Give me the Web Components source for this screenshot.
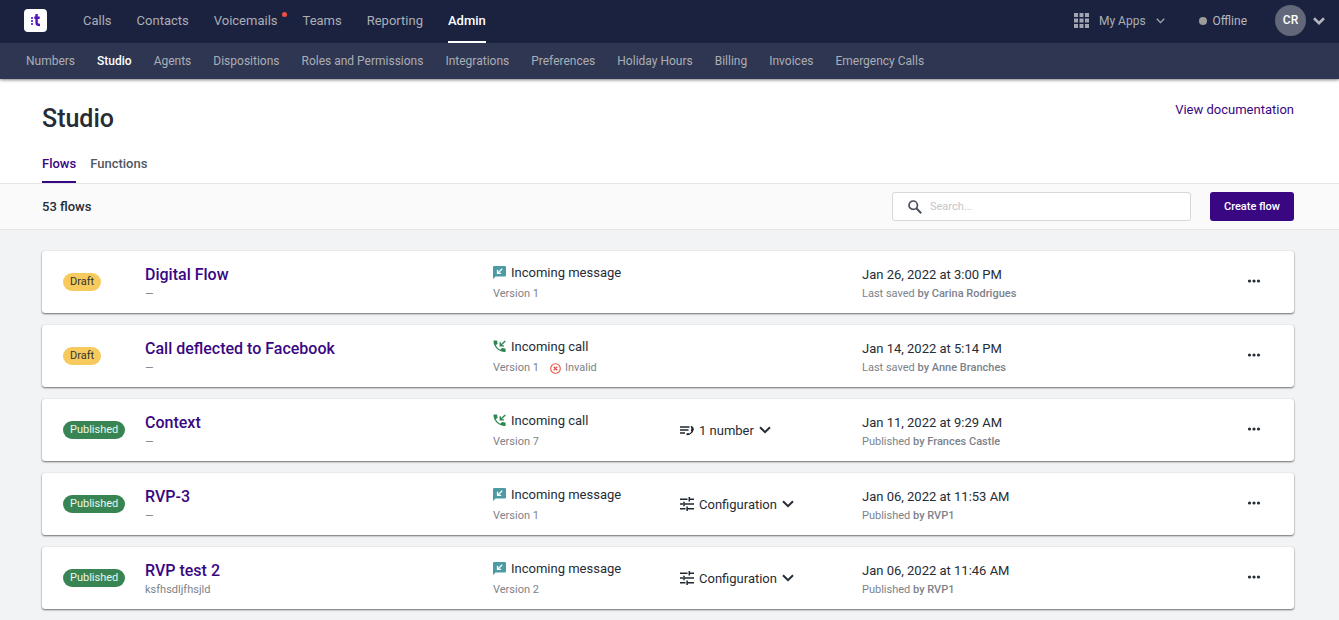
<!DOCTYPE html>
<html lang="en">
<head>
<meta charset="utf-8">
<meta name="viewport" content="width=device-width, initial-scale=1">
<title>Studio</title>
<style>
  body {
    margin: 0;
    background: #f2f3f5;
    color: #262c35;
    font-family: Roboto, "Liberation Sans", sans-serif;
    font-size: 13px;
  }
</style>
</head>
<body>

<app-header>
  <nav-link href="#calls">Calls</nav-link>
  <nav-link href="#contacts">Contacts</nav-link>
  <nav-link href="#voicemails" notify>Voicemails</nav-link>
  <nav-link href="#teams">Teams</nav-link>
  <nav-link href="#reporting">Reporting</nav-link>
  <nav-link href="#admin" active>Admin</nav-link>

  <nav-link slot="sub" small href="#numbers">Numbers</nav-link>
  <nav-link slot="sub" small href="#studio" active>Studio</nav-link>
  <nav-link slot="sub" small href="#agents">Agents</nav-link>
  <nav-link slot="sub" small href="#dispositions">Dispositions</nav-link>
  <nav-link slot="sub" small href="#roles">Roles and Permissions</nav-link>
  <nav-link slot="sub" small href="#integrations">Integrations</nav-link>
  <nav-link slot="sub" small href="#preferences">Preferences</nav-link>
  <nav-link slot="sub" small href="#holidays">Holiday Hours</nav-link>
  <nav-link slot="sub" small href="#billing">Billing</nav-link>
  <nav-link slot="sub" small href="#invoices">Invoices</nav-link>
  <nav-link slot="sub" small href="#emergency">Emergency Calls</nav-link>

  <user-menu slot="user" initials="CR" status="Offline"></user-menu>
</app-header>

<main>
  <page-header>
    Studio
    <page-tab slot="tabs" href="#flows" active>Flows</page-tab>
    <page-tab slot="tabs" href="#functions">Functions</page-tab>
  </page-header>
  <flow-toolbar>53 flows</flow-toolbar>
  <flow-list>
    <flow-card status="Draft" trigger="message" version="1" action="Last saved" by="Carina Rodrigues">
      Digital Flow
      <span slot="date">Jan 26, 2022 at 3:00 PM</span>
    </flow-card>
    <flow-card status="Draft" trigger="call" version="1" invalid action="Last saved" by="Anne Branches">
      Call deflected to Facebook
      <span slot="date">Jan 14, 2022 at 5:14 PM</span>
    </flow-card>
    <flow-card status="Published" trigger="call" version="7" setup="1 number" action="Published" by="Frances Castle">
      Context
      <span slot="date">Jan 11, 2022 at 9:29 AM</span>
    </flow-card>
    <flow-card status="Published" trigger="message" version="1" setup="Configuration" action="Published" by="RVP1">
      RVP-3
      <span slot="date">Jan 06, 2022 at 11:53 AM</span>
    </flow-card>
    <flow-card status="Published" trigger="message" version="2" setup="Configuration" action="Published" by="RVP1">
      RVP test 2
      <span slot="note">ksfhsdljfhsjld</span>
      <span slot="date">Jan 06, 2022 at 11:46 AM</span>
    </flow-card>
  </flow-list>
</main>

<script>
const icons = {
  logo: `<svg width="23" height="23" viewBox="0 0 23 23"><rect width="23" height="23" rx="4" fill="#fff"/>
    <g fill="#6b3fd0"><rect x="7" y="8" width="2" height="2"/><rect x="7" y="11" width="2" height="2"/><rect x="7" y="14" width="2" height="2"/></g>
    <path d="M12.6 5v9q0 2 3.4 2M10.3 8.8h5.4" fill="none" stroke="#5514b4" stroke-width="2.4"/></svg>`,
  apps: `<svg width="15" height="15" viewBox="0 0 15 15" fill="#a3a6b0"><path d="M0 0h4v4H0zM5.500 0h4v4h-4zM11 0h4v4h-4zM0 5.500h4v4H0zM5.500 5.500h4v4h-4zM11 5.500h4v4h-4zM0 11h4v4H0zM5.500 11h4v4h-4zM11 11h4v4h-4z"/></svg>`,
  chevronThin: `<svg width="9" height="6" viewBox="0 0 9 6" fill="none" stroke="#a9acb3" stroke-width="1.300"><path d="M.8.8l3.700 3.800L8.200.8"/></svg>`,
  chevron: `<svg width="12" height="8" viewBox="0 0 12 8" fill="none" stroke="currentColor" stroke-width="2"><path d="M1 1.200l5 5 5-5"/></svg>`,
  chevronBold: `<svg width="12" height="8" viewBox="0 0 12 8" fill="none" stroke="#b5b7bc" stroke-width="2.600"><path d="M1 1.300l5 4.900 5-4.900"/></svg>`,
  search: `<svg width="14" height="14" viewBox="0 0 14 14" fill="none" stroke="#4b515b" stroke-width="1.700"><circle cx="5.200" cy="5.200" r="4.200"/><path d="M8.300 8.300l4.900 4.900" stroke-width="2"/></svg>`,
  message: `<svg width="13" height="13" viewBox="0 0 13 13"><path d="M1.200 0h10.600Q13 0 13 1.200v8.100q0 1.200-1.200 1.200H2.600L0 13V1.200Q0 0 1.200 0z" fill="#4c9ba4"/>
    <path d="M9.200 2.700L4.800 7.100M4.500 3.800v3.600h3.700" fill="none" stroke="#fff" stroke-width="1.300"/></svg>`,
  call: `<svg width="13" height="13" viewBox="0 0 13 13"><path d="M2.600 5.100a9.600 9.600 0 0 0 4.600 4.700l1.600-1.600q.3-.3.7-.2 1.200.4 2.500.4.600 0 .6.600v2.500q0 .6-.6.600C5.500 12.100.5 7 .5 1.100Q.5.500 1.100.500h2.500q.6 0 .6.600 0 1.300.4 2.400.1.400-.2.700z" fill="#2f8552"/>
    <path d="M12.300.9L7.500 5.600M7.300 2.200v3.700H11" fill="none" stroke="#2f8552" stroke-width="1.400"/></svg>`,
  invalid: `<svg width="11" height="11" viewBox="0 0 11 11" fill="none" stroke="#e8554a"><circle cx="5.500" cy="5.500" r="4.800" stroke-width="1.100"/><path d="M3.700 3.700l3.600 3.600M7.300 3.700L3.700 7.300" stroke-width="1.300"/></svg>`,
  numbers: `<svg width="14" height="11" viewBox="0 0 14 11"><path d="M0 2h9.500M0 5h8.500M0 8h5" fill="none" stroke="#20262f" stroke-width="1.500"/>
    <path d="M10.600 1.200q.9-.4 1.900.2Q14.300 3 13.600 5.300q-1.500 4.200-6.100 5-1-.2-1.100-1.100l.3-1 1.900-.2.400.7q1.700-.7 2.500-2.500l-.7-.6.600-2.100z" fill="#20262f"/></svg>`,
  sliders: `<svg width="14" height="14" viewBox="0 0 14 14" fill="none" stroke="#20262f" stroke-width="1.500"><path d="M0 2.300h7.500M9.200 2.300H14M9.300 0v4.600M0 7h3M4.800 7H14M4 4.700v4.600M11 7h3M0 11.700h5.500M7.200 11.700H14M7.100 9.400V14"/></svg>`,
  dots: `<svg width="14" height="4" viewBox="0 0 14 4" fill="#262c35"><circle cx="2.500" cy="2" r="1.600"/><circle cx="7" cy="2" r="1.600"/><circle cx="11.500" cy="2" r="1.600"/></svg>`,
};

class NavLink extends HTMLElement {
  constructor() {
    super();
    this.attachShadow({ mode: "open" });
  }

  connectedCallback() {
    this.shadowRoot.innerHTML = `
      <style>
        :host {
          display: flex;
          flex: none;
          font-size: 13px;
        }

        :host([small]) {
          font-size: 12px;
        }

        a {
          position: relative;
          display: flex;
          align-items: center;
          padding-bottom: 2px;
          color: #abaeb5;
          text-decoration: none;
          white-space: nowrap;
        }

        :host([small]) a {
          padding-bottom: 0;
        }

        :host([active]) a {
          color: #fff;
          font-weight: 500;
        }

        :host([active]:not([small])) a {
          box-shadow: inset 0 -2px #fff;
        }

        i {
          position: absolute;
          top: 12px;
          right: -9px;
          width: 5px;
          height: 5px;
          border-radius: 50%;
          background: #ed5142;
        }
      </style>
      <a href="${this.getAttribute("href")}"><slot></slot>${this.hasAttribute("notify") ? "<i></i>" : ""}</a>
    `;
  }
}

class UserMenu extends HTMLElement {
  constructor() {
    super();
    this.attachShadow({ mode: "open" });
  }

  connectedCallback() {
    this.shadowRoot.innerHTML = `
      <style>
        :host {
          display: flex;
          align-items: center;
          color: #abaeb5;
          font-size: 12px;
        }

        button {
          display: flex;
          align-items: center;
          padding: 0;
          border: 0;
          background: none;
          color: inherit;
          font: inherit;
          cursor: pointer;
        }

        .apps {
          gap: 10px;
          margin-right: 34px;
        }

        .status {
          gap: 6px;
          margin-right: 28px;
          color: #b5b8be;
        }

        .status i {
          width: 8px;
          height: 8px;
          border-radius: 50%;
          background: #9b9b9b;
        }

        .account {
          gap: 7px;
        }

        .avatar {
          width: 31px;
          border-radius: 50%;
          background: #626879;
          color: #fff;
          font-weight: 500;
          line-height: 31px;
          text-align: center;
        }
      </style>
      <button class="apps">${icons.apps}<span>My Apps</span>${icons.chevronThin}</button>
      <button class="status"><i></i><span>${this.getAttribute("status")}</span></button>
      <button class="account"><span class="avatar">${this.getAttribute("initials")}</span>${icons.chevronBold}</button>
    `;
  }
}

class AppHeader extends HTMLElement {
  constructor() {
    super();
    this.attachShadow({ mode: "open" });
  }

  connectedCallback() {
    this.shadowRoot.innerHTML = `
      <style>
        :host {
          display: block;
          position: relative;
          box-shadow: 0 1px 3px rgba(0, 0, 0, 0.5);
        }

        .top,
        .sub,
        .main {
          display: flex;
        }

        .top {
          justify-content: space-between;
          height: 43px;
          padding: 0 14px 0 24px;
          background: #1b2240;
        }

        .main {
          gap: 25px;
        }

        .logo {
          display: flex;
          align-items: center;
          margin-right: 11px;
          padding-bottom: 2px;
        }

        .user {
          display: flex;
          padding-bottom: 2px;
        }

        .sub {
          gap: 22px;
          height: 36px;
          padding: 0 26px;
          background: #2e3652;
        }
      </style>
      <header>
        <div class="top">
          <nav class="main">
            <a class="logo" href="#home" aria-label="Home">${icons.logo}</a>
            <slot></slot>
          </nav>
          <div class="user"><slot name="user"></slot></div>
        </div>
        <nav class="sub"><slot name="sub"></slot></nav>
      </header>
    `;
  }
}

class PageTab extends HTMLElement {
  constructor() {
    super();
    this.attachShadow({ mode: "open" });
  }

  connectedCallback() {
    this.shadowRoot.innerHTML = `
      <style>
        :host {
          display: block;
        }

        a {
          display: block;
          padding: 10px 0 8px;
          border-bottom: 2px solid transparent;
          color: #505762;
          font-size: 13px;
          font-weight: 500;
          line-height: 18px;
          text-decoration: none;
        }

        :host([active]) a {
          border-color: #3a0783;
          color: #3a0783;
        }
      </style>
      <a href="${this.getAttribute("href")}"><slot></slot></a>
    `;
  }
}

class PageHeader extends HTMLElement {
  constructor() {
    super();
    this.attachShadow({ mode: "open" });
  }

  connectedCallback() {
    this.shadowRoot.innerHTML = `
      <style>
        :host {
          display: block;
          padding: 22px 45px 0 42px;
          border-bottom: 1px solid #e5e6e8;
          background: #fff;
        }

        .title {
          display: flex;
          justify-content: space-between;
          align-items: flex-start;
          margin-bottom: 8px;
        }

        h1 {
          margin: 0;
          font-size: 25px;
          font-weight: 500;
          line-height: 36px;
        }

        .docs {
          color: #3a0783;
          line-height: 18px;
          text-decoration: none;
        }

        nav {
          display: flex;
          gap: 14px;
        }
      </style>
      <div class="title">
        <h1><slot></slot></h1>
        <a class="docs" href="#docs">View documentation</a>
      </div>
      <nav><slot name="tabs"></slot></nav>
    `;
  }
}

class FlowToolbar extends HTMLElement {
  constructor() {
    super();
    this.attachShadow({ mode: "open" });
  }

  connectedCallback() {
    this.shadowRoot.innerHTML = `
      <style>
        :host {
          display: flex;
          align-items: center;
          padding: 8px 45px 8px 42px;
          border-bottom: 1px solid #e3e5e8;
          background: #fafafa;
        }

        .count {
          flex: 1;
          font-weight: 500;
        }

        .search {
          display: flex;
          align-items: center;
          gap: 8px;
          box-sizing: border-box;
          width: 299px;
          height: 29px;
          margin-right: 19px;
          padding: 0 15px;
          border: 1px solid #d6d8da;
          border-radius: 3px;
          background: #fff;
        }

        .search svg {
          display: block;
        }

        input {
          flex: 1;
          min-width: 0;
          padding: 0;
          border: 0;
          outline: 0;
          background: none;
          color: inherit;
          font: inherit;
          font-size: 11px;
        }

        input::placeholder {
          color: #c3c6ca;
        }

        button {
          height: 29px;
          padding: 0 14px;
          border: 0;
          border-radius: 3px;
          background: #3a0783;
          color: #fff;
          font: inherit;
          font-size: 11px;
          font-weight: 500;
          cursor: pointer;
        }
      </style>
      <div class="count"><slot></slot></div>
      <div class="search">
        <label for="search">${icons.search}</label>
        <input id="search" type="text" aria-label="Search flows" placeholder="Search...">
      </div>
      <button>Create flow</button>
    `;
  }
}

class FlowList extends HTMLElement {
  constructor() {
    super();
    this.attachShadow({ mode: "open" });
  }

  connectedCallback() {
    this.shadowRoot.innerHTML = `
      <style>
        :host {
          display: flex;
          flex-direction: column;
          gap: 12px;
          padding: 21px 45px 12px 42px;
        }
      </style>
      <slot></slot>
    `;
  }
}

class FlowCard extends HTMLElement {
  constructor() {
    super();
    this.attachShadow({ mode: "open" });
  }

  connectedCallback() {
    this.render();
  }

  render() {
    const status = this.getAttribute("status");
    const trigger = this.getAttribute("trigger");
    const setup = this.getAttribute("setup");
    const setupIcon = setup === "Configuration" ? icons.sliders : icons.numbers;

    this.shadowRoot.innerHTML = `
      <style>
        :host {
          display: grid;
          grid-template-columns: 82px 348fr 187fr 182fr 385fr 14px;
          align-items: center;
          padding: 11px 33px 11px 21px;
          border-radius: 3px;
          background: #fff;
          box-shadow: 0 1px 2px rgba(0, 0, 0, 0.55), 0 0 1px rgba(0, 0, 0, 0.15);
        }

        .badge {
          justify-self: start;
          padding: 0 7px 1px;
          border-radius: 9px;
          font-size: 11px;
          line-height: 17px;
        }

        .draft {
          background: #f7ca5e;
          color: #33342c;
        }

        .published {
          background: #388553;
          color: #eaf5ee;
        }

        .text {
          padding-top: 2px;
        }

        h2 {
          margin: 0;
          font-size: 16px;
          font-weight: 500;
          line-height: 22px;
        }

        h2 a {
          color: #3a0783;
          text-decoration: none;
        }

        .small {
          display: flex;
          align-items: center;
          color: #7d828a;
          font-size: 11px;
          line-height: 16px;
          white-space: pre;
        }

        .small svg {
          margin: 0 4px 0 11px;
        }

        b {
          font-weight: 500;
        }

        .trigger {
          display: flex;
          align-items: center;
          gap: 5px;
          margin-bottom: 3px;
          line-height: 21px;
        }

        .date {
          line-height: 22px;
        }

        button {
          display: flex;
          align-items: center;
          padding: 0;
          border: 0;
          background: none;
          color: inherit;
          font: inherit;
          cursor: pointer;
        }

        .setup {
          gap: 5px;
        }

        .more {
          height: 18px;
          padding-bottom: 2px;
        }
      </style>
      <span class="badge ${status.toLowerCase()}">${status}</span>
      <div class="text">
        <h2><a href="#flow"><slot></slot></a></h2>
        <div class="small"><slot name="note">—</slot></div>
      </div>
      <div>
        <div class="trigger">${icons[trigger]}<span>Incoming ${trigger}</span></div>
        <div class="small">Version ${this.getAttribute("version")}${this.hasAttribute("invalid") ? icons.invalid + "<span>Invalid</span>" : ""}</div>
      </div>
      <div>${setup ? `<button class="setup">${setupIcon}<span>${setup}</span>${icons.chevron}</button>` : ""}</div>
      <div class="text">
        <div class="date"><slot name="date"></slot></div>
        <div class="small">${this.getAttribute("action")} <b>by ${this.getAttribute("by")}</b></div>
      </div>
      <button class="more" aria-label="More actions">${icons.dots}</button>
    `;
  }
}

customElements.define("nav-link", NavLink);
customElements.define("user-menu", UserMenu);
customElements.define("app-header", AppHeader);
customElements.define("page-tab", PageTab);
customElements.define("page-header", PageHeader);
customElements.define("flow-toolbar", FlowToolbar);
customElements.define("flow-list", FlowList);
customElements.define("flow-card", FlowCard);
</script>
</body>
</html>
